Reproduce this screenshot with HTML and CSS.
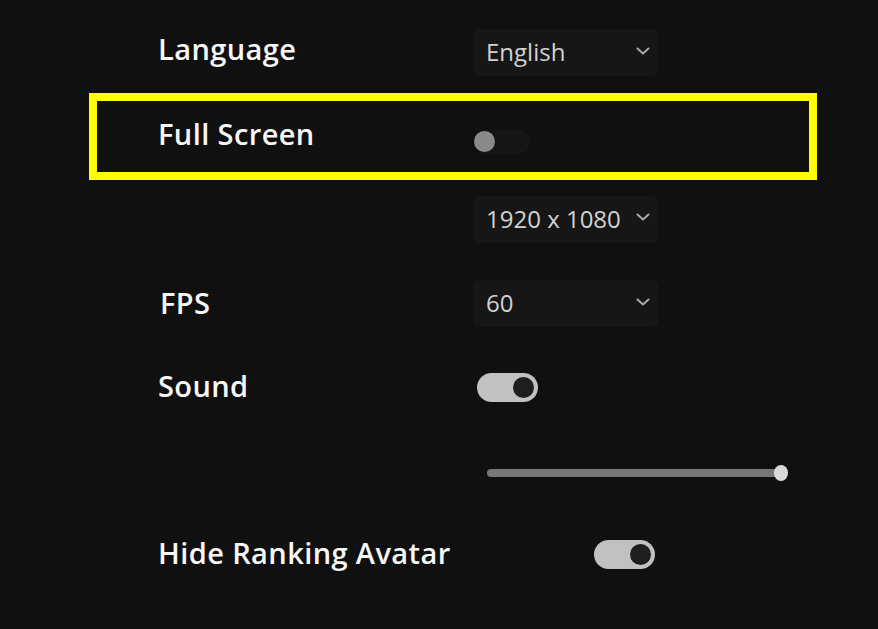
FILE: index.html
```html
<!DOCTYPE html>
<html lang="en">
<head>
<meta charset="utf-8">
<title>Settings</title>
<link rel="stylesheet" href="styles.css">
</head>
<body>
<div class="settings">
  <div class="row row-lang">
    <div class="label">Language</div>
    <div class="select"><span class="select-text">English</span><svg class="chev" width="14" height="8" viewBox="0 0 14 8"><path d="M1.5 1.5 L7 6.5 L12.5 1.5" fill="none" stroke="#a8a8a8" stroke-width="2" stroke-linecap="round" stroke-linejoin="round"/></svg></div>
  </div>
  <div class="highlight">
    <div class="row row-full">
      <div class="label">Full Screen</div>
      <div class="toggle toggle-off"><span class="knob"></span></div>
    </div>
  </div>
  <div class="row row-res">
    <div class="label"></div>
    <div class="select"><span class="select-text">1920 x 1080</span><svg class="chev" width="14" height="8" viewBox="0 0 14 8"><path d="M1.5 1.5 L7 6.5 L12.5 1.5" fill="none" stroke="#a8a8a8" stroke-width="2" stroke-linecap="round" stroke-linejoin="round"/></svg></div>
  </div>
  <div class="row row-fps">
    <div class="label label-fps">FPS</div>
    <div class="select"><span class="select-text">60</span><svg class="chev" width="14" height="8" viewBox="0 0 14 8"><path d="M1.5 1.5 L7 6.5 L12.5 1.5" fill="none" stroke="#a8a8a8" stroke-width="2" stroke-linecap="round" stroke-linejoin="round"/></svg></div>
  </div>
  <div class="row row-sound">
    <div class="label">Sound</div>
    <div class="toggle toggle-on toggle-sound"><span class="knob"></span></div>
  </div>
  <div class="row row-slider">
    <div class="label"></div>
    <div class="slider"><div class="slider-track"></div><div class="slider-thumb"></div></div>
  </div>
  <div class="row row-hide">
    <div class="label label-hide">Hide Ranking Avatar</div>
    <div class="toggle toggle-on"><span class="knob"></span></div>
  </div>
</div>
</body>
</html>
```
FILE: styles.css
```css
html, body {
  margin: 0;
  padding: 0;
  background: #101010;
}
body {
  width: 878px;
  height: 629px;
  overflow: hidden;
  font-family: "Open Sans", "Noto Sans", sans-serif;
}
.settings {
  display: flex;
  flex-direction: column;
  padding: 29px 0 0 158px;
}
.row {
  display: flex;
  align-items: center;
}
.label {
  width: 315px;
  flex: none;
  color: #f7f7f7;
  font-size: 29px;
  font-weight: 600;
  letter-spacing: 0.4px;
  padding-bottom: 9px;
  white-space: nowrap;
}
.label-fps {
  padding-left: 2px;
  width: 313px;
}
.label-hide {
  width: 436px;
}
.select {
  width: 185px;
  height: 47px;
  box-sizing: border-box;
  background: #161616;
  border-radius: 6px;
  display: flex;
  align-items: center;
  justify-content: space-between;
  padding: 0 8px 2px 13px;
}
.select-text {
  color: #d2d2d2;
  font-size: 24px;
  font-weight: 500;
}
.chev {
  margin-bottom: 2px;
}
.row-lang { height: 47px; }
.highlight {
  margin: 17px 0 0 -69px;
  width: 728px;
  height: 87px;
  box-sizing: border-box;
  border: 8px solid #ffff00;
  padding-left: 61px;
  display: flex;
  align-items: center;
}
.row-full .label {
  padding-bottom: 5px;
}
.row-full { margin-top: -1px; }
.row-res { margin-top: 16px; height: 46px; }
.row-fps { margin-top: 38px; height: 47px; }
.row-fps .label { padding-bottom: 3px; }
.row-sound { margin-top: 46px; height: 29px; }
.row-sound .label { padding-bottom: 4px; }
.row-slider { margin-top: 63px; height: 16px; }
.row-hide { margin-top: 59px; height: 29px; }
.row-hide .label { padding-bottom: 4px; }

.toggle {
  position: relative;
  flex: none;
  border-radius: 15px;
}
.toggle-off {
  width: 56px;
  height: 25px;
  background: #151515;
  margin-top: 10px;
  margin-left: 1px;
}
.toggle-off .knob {
  position: absolute;
  left: 0;
  top: 2px;
  width: 21px;
  height: 21px;
  border-radius: 50%;
  background: #8a8a8a;
}
.toggle-on {
  width: 61px;
  height: 29px;
  background: #c1c1c1;
}
.toggle-sound {
  margin-left: 4px;
}
.toggle-on .knob {
  position: absolute;
  right: 4px;
  top: 4px;
  width: 21px;
  height: 21px;
  border-radius: 50%;
  background: #1e1e1e;
}
.slider {
  position: relative;
  margin-left: 14px;
  width: 301px;
  height: 16px;
}
.slider-track {
  position: absolute;
  left: 0;
  right: 7px;
  top: 4px;
  height: 8px;
  border-radius: 4px;
  background: #777777;
}
.slider-thumb {
  position: absolute;
  right: 0;
  top: 0;
  width: 14px;
  height: 16px;
  border-radius: 50%;
  background: #dadada;
}
```
